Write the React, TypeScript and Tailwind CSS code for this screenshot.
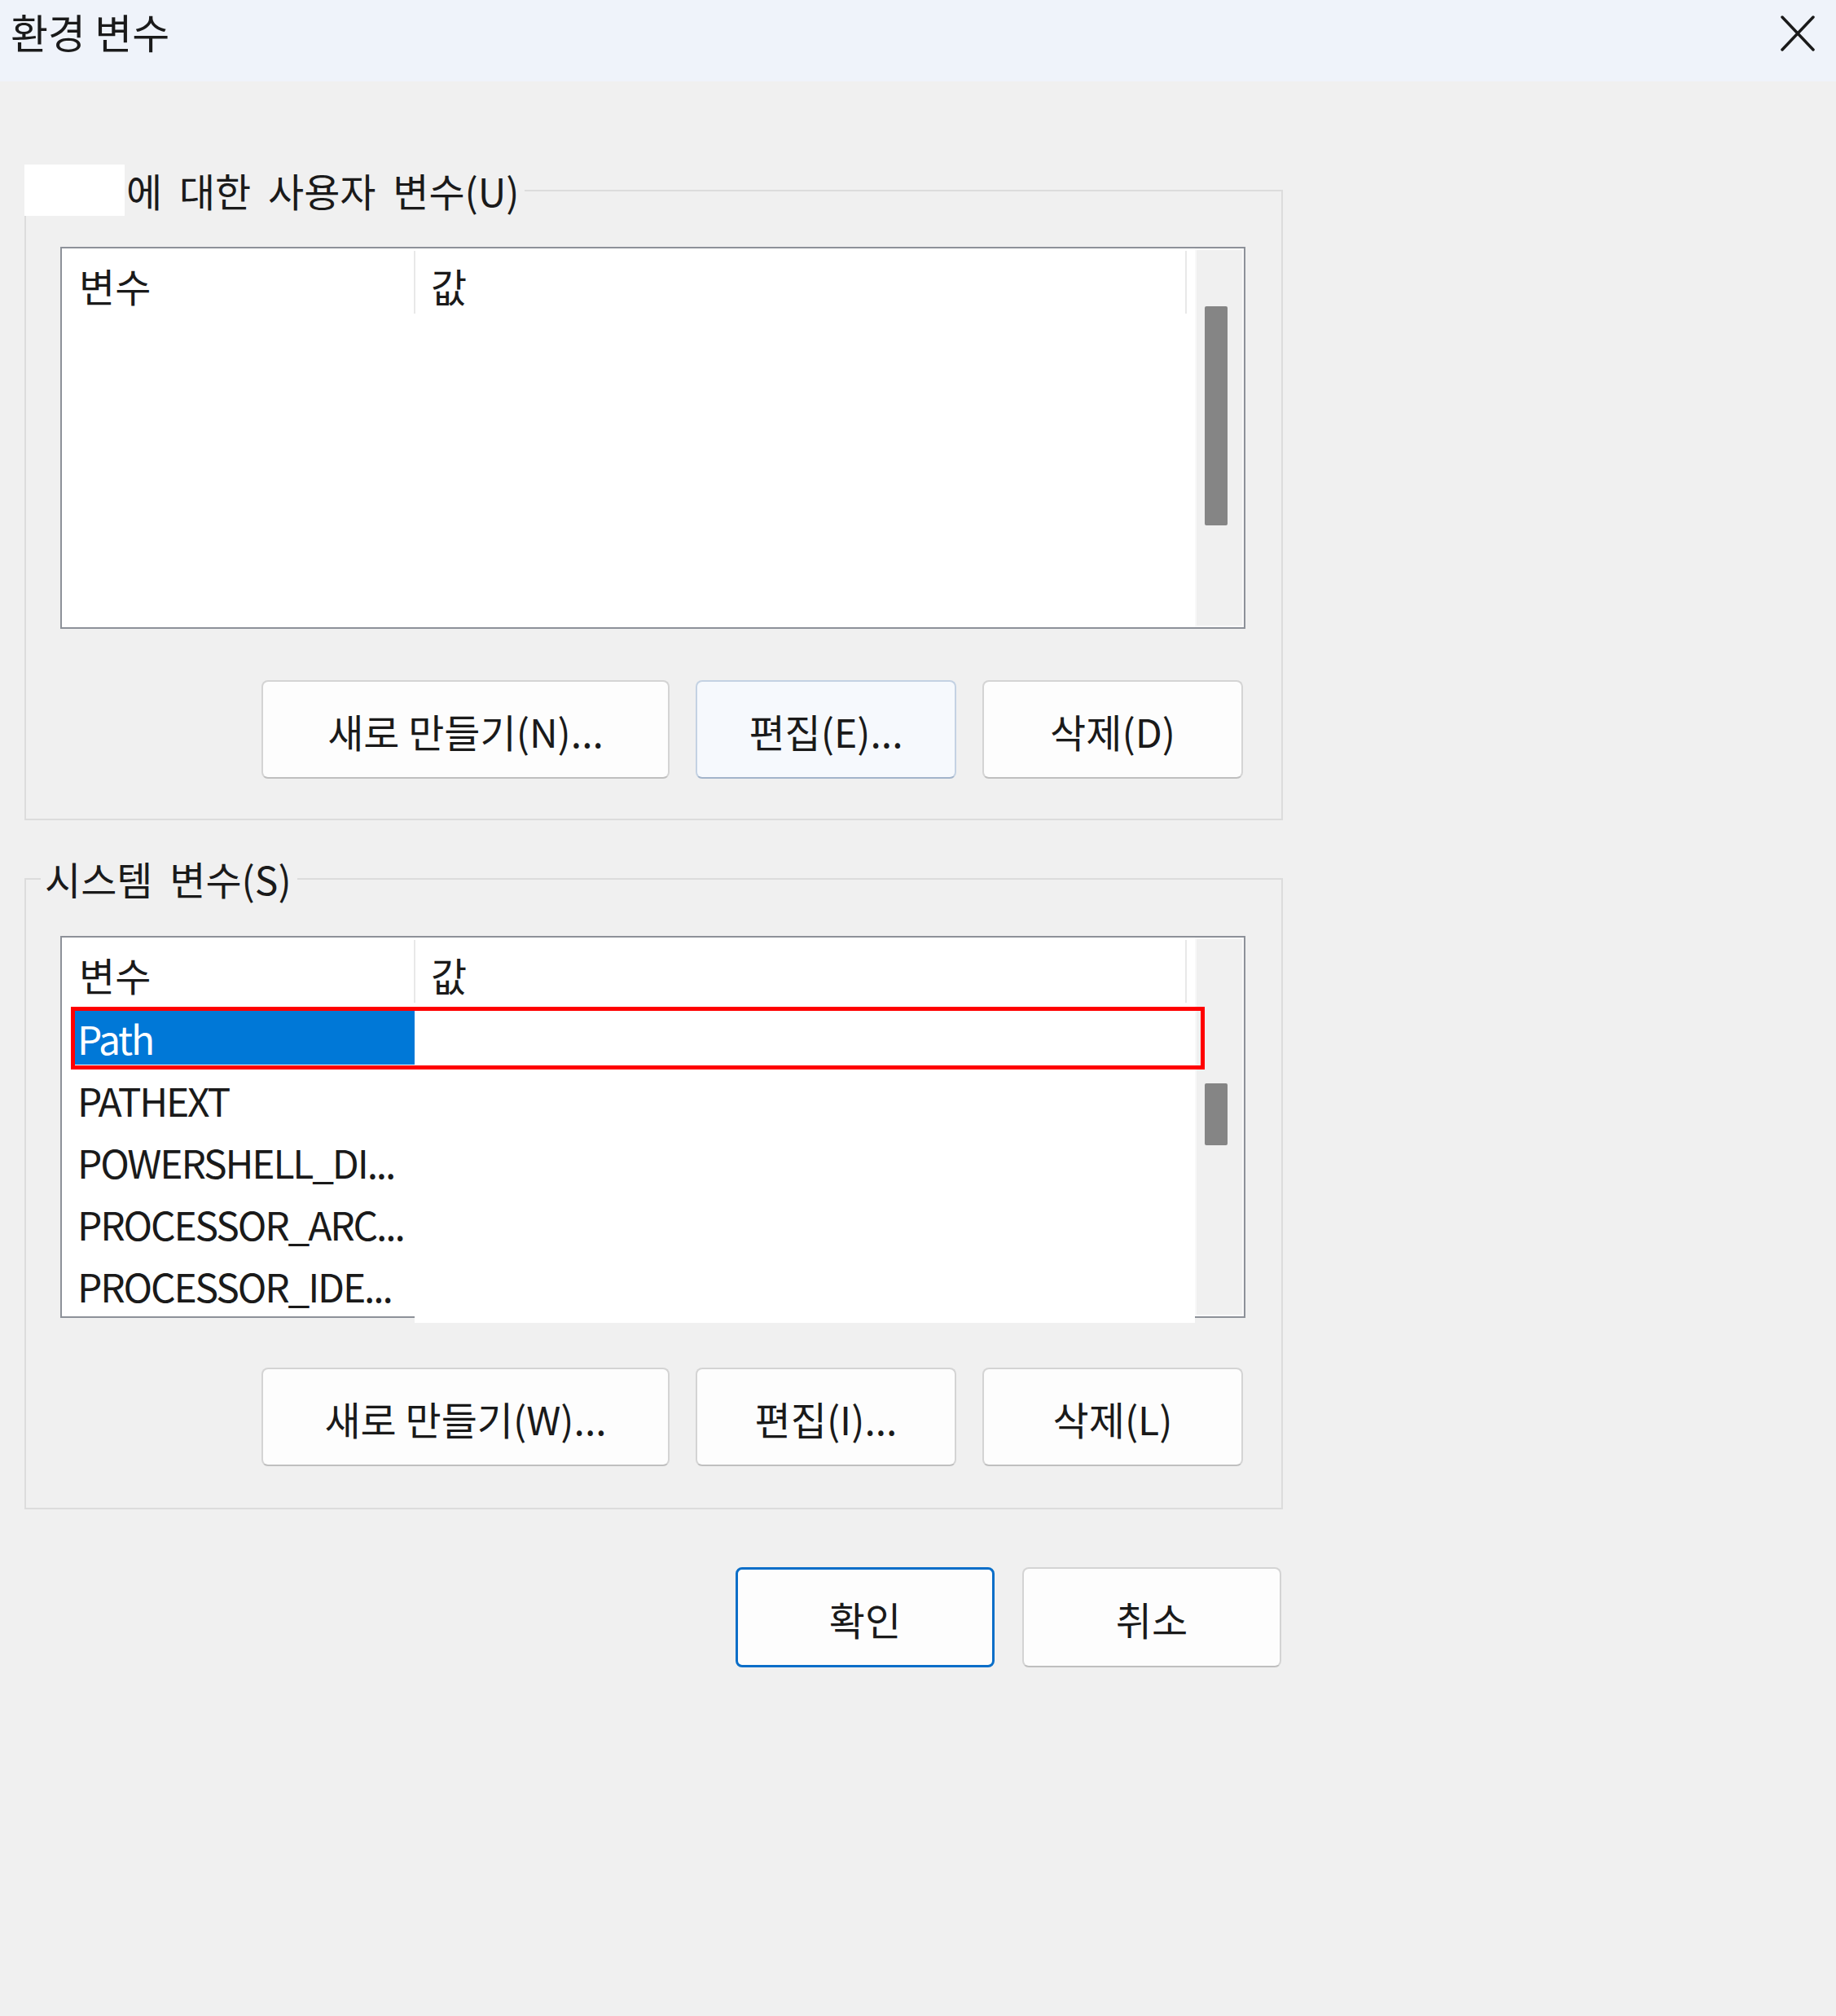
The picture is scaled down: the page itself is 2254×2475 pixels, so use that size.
import React from 'react';

type BtnProps = {
  label: string;
  className: string;
  variant?: 'default' | 'hover' | 'primary';
};

function DialogButton({ label, className, variant = 'default' }: BtnProps) {
  const look =
    variant === 'primary'
      ? 'border-[3px] border-[#0a6ec8] bg-[#fdfdfd]'
      : variant === 'hover'
        ? 'border-2 border-[#c4d2e3] border-b-[#a2b4ca] bg-[#f6f9fd]'
        : 'border-2 border-[#d4d4d4] border-b-[#bfbfbf] bg-[#fdfdfd]';
  return (
    <button className={`flex items-center justify-center rounded-[8px] ${look} ${className}`}>
      <span className="pt-[2px]">{label}</span>
    </button>
  );
}

type ListProps = {
  rows: string[];
  thumb: string;
  cutBottom?: boolean;
};

function VarList({ rows, thumb, cutBottom }: ListProps) {
  return (
    <div className="relative flex h-[469px] border-2 border-[#8d9199] bg-white">
      <div className="flex w-[1391px] flex-col">
        {/* header */}
        <div className="flex h-[83px] shrink-0">
          <div className="flex w-[432px] items-center pl-[21px] pt-[6px]">변수</div>
          <div className="my-[3px] w-[2px] bg-[#e8e8e8]" />
          <div className="flex flex-1 items-center pl-[19px] pt-[6px]">값</div>
          <div className="my-[3px] w-[2px] bg-[#e8e8e8]" />
          <div className="w-[10px]" />
        </div>

        <div className="flex flex-col gap-[10px] pt-[7px]">
          {rows.map((name, i) => (
            <div key={name} className="relative flex h-[66px]">
              <div
                className={`ml-[11px] flex w-[422px] items-center pl-[8px] tracking-[-0.045em] ${
                  i === 0 ? 'bg-[#0078d7] text-white' : ''
                }`}
              >
                {name}
              </div>
              {i === 0 && (
                <div className="absolute -top-[5px] -bottom-[6px] left-[11px] -right-[12px] border-[5px] border-[#ff0000]" />
              )}
            </div>
          ))}
        </div>
      </div>

      {/* scrollbar track */}
      <div className="flex flex-1 flex-col items-start border-2 border-[#f9f9f9] bg-[#f0f0f0]">
        <div className={`ml-[10px] w-[28px] rounded-[2px] bg-[#858585] ${thumb}`} />
      </div>

      {cutBottom && <div className="absolute -bottom-[8px] left-[433px] h-[10px] w-[958px] bg-white" />}
    </div>
  );
}

export default function App() {
  return (
    <div className="min-h-[2475px] w-[2254px] bg-[#f0f0f0] font-['Noto_Sans_CJK_KR',sans-serif] text-[48px] text-[#1a1a1a]">
      {/* title bar */}
      <div className="flex h-[100px] items-start justify-between bg-[#eff3fa]">
        <div className="pl-[13px] pt-[8px] text-[50px] leading-[60px]">환경 변수</div>
        <svg className="mt-[19px] mr-[26px] h-[44px] w-[42px]" viewBox="0 0 42 44" fill="none">
          <path d="M2 2L40 42M40 2L2 42" stroke="#1a1a1a" strokeWidth="3.5" strokeLinecap="round" />
        </svg>
      </div>

      <div className="pl-[30px] pt-[102px]">
        {/* user variables */}
        <fieldset className="w-[1545px] border-2 border-[#dcdcdc]">
          <legend className="-ml-[2px] flex h-[63px] items-center pr-[6px]">
            <span className="h-[63px] w-[123px] bg-white" />
            <span className="pl-[2px] leading-[63px] [word-spacing:10px]">에 대한 사용자 변수(U)</span>
          </legend>
          <div className="pl-[42px] pr-[44px] pt-[38px] pb-[49px]">
            <VarList rows={[]} thumb="mt-[69px] h-[269px]" />
            <div className="mt-[63px] flex justify-end gap-[32px] pr-[3px]">
              <DialogButton label="새로 만들기(N)..." className="h-[121px] w-[501px]" />
              <DialogButton label="편집(E)..." className="h-[121px] w-[320px]" variant="hover" />
              <DialogButton label="삭제(D)" className="h-[121px] w-[320px]" />
            </div>
          </div>
        </fieldset>

        {/* system variables */}
        <fieldset className="mt-[40px] w-[1545px] border-2 border-[#dcdcdc]">
          <legend className="ml-[18px] flex h-[63px] items-center pl-[5px] pr-[7px]">
            <span className="leading-[63px] [word-spacing:10px]">시스템 변수(S)</span>
          </legend>
          <div className="pl-[42px] pr-[44px] pt-[39px] pb-[51px]">
            <VarList
              rows={['Path', 'PATHEXT', 'POWERSHELL_DI...', 'PROCESSOR_ARC...', 'PROCESSOR_IDE...']}
              thumb="mt-[177px] h-[76px]"
              cutBottom
            />
            <div className="mt-[61px] flex justify-end gap-[32px] pr-[3px]">
              <DialogButton label="새로 만들기(W)..." className="h-[121px] w-[501px]" />
              <DialogButton label="편집(I)..." className="h-[121px] w-[320px]" />
              <DialogButton label="삭제(L)" className="h-[121px] w-[320px]" />
            </div>
          </div>
        </fieldset>

        <div className="mt-[71px] flex w-[1545px] justify-end gap-[34px] pr-[2px]">
          <DialogButton label="확인" className="h-[123px] w-[318px]" variant="primary" />
          <DialogButton label="취소" className="h-[123px] w-[318px]" />
        </div>
      </div>
    </div>
  );
}
